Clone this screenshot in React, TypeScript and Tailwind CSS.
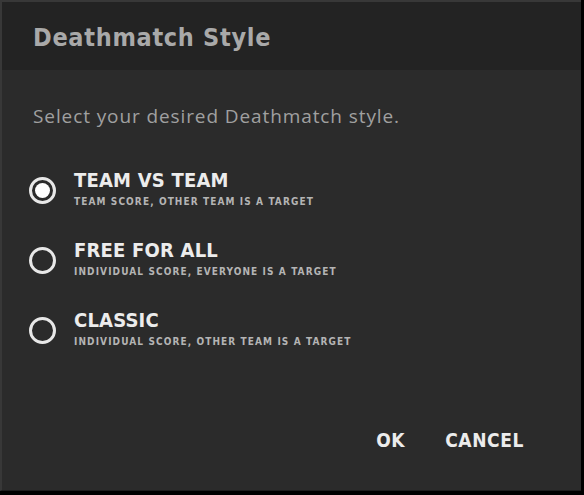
import React, { useState } from "react";

type styleOption = {
  title: string;
  description: string;
};

const Style_List: styleOption[] = [
  { title: "TEAM VS TEAM", description: "TEAM SCORE, OTHER TEAM IS A TARGET" },
  { title: "FREE FOR ALL", description: "INDIVIDUAL SCORE, EVERYONE IS A TARGET" },
  { title: "CLASSIC", description: "INDIVIDUAL SCORE, OTHER TEAM IS A TARGET" },
];

const stratum = { fontFamily: '"DejaVu Sans Condensed", "DejaVu Sans", sans-serif' };

const App: React.FC<{}> = () => {
  const [selected, setSelected] = useState(0);

  return (
    <div className="w-[584px] h-[495px] bg-black">
      <div className="w-[581px] h-[491px] flex flex-col bg-[#2b2b2b] border-t-2 border-l-2 border-[#383838] border-b border-b-[#1e1e1e]">
        <div className="h-[68px] bg-[#232323] flex items-center pl-[31px]">
          <h1
            style={stratum}
            className="text-[#a9a9a9] font-bold text-[25px] tracking-[0.7px] pt-[3px]"
          >
            Deathmatch Style
          </h1>
        </div>

        <p
          style={{ fontFamily: '"Open Sans", sans-serif' }}
          className="text-[#a0a0a0] text-[19px] tracking-[0.9px] pl-[31px] pt-[32px]"
        >
          Select your desired Deathmatch style.
        </p>

        <div className="flex flex-col pl-[27px] pt-[36px] gap-[23px]">
          {Style_List.map((option, index) => (
            <div
              key={index}
              onClick={() => setSelected(index)}
              className="flex items-center gap-[18px] cursor-pointer h-[47px]"
            >
              <div className="w-[27px] h-[27px] rounded-full border-[3px] border-[#e8e8e8] flex items-center justify-center">
                {selected === index && (
                  <div className="w-[15px] h-[15px] rounded-full bg-white" />
                )}
              </div>
              <div style={stratum} className="flex flex-col">
                <span className="text-[#ececec] font-bold text-[20px] tracking-[0.2px] leading-[24px]">
                  {option.title}
                </span>
                <span className="text-[#b4b4b4] font-bold text-[10px] tracking-[1.1px] leading-[20px]">
                  {option.description}
                </span>
              </div>
            </div>
          ))}
        </div>

        <div
          style={stratum}
          className="mt-auto mb-[36px] flex justify-end gap-[40px] pr-[57px] text-[#ececec] font-bold text-[19px] tracking-[0.6px]"
        >
          <button className="cursor-pointer">OK</button>
          <button className="cursor-pointer">CANCEL</button>
        </div>
      </div>
    </div>
  );
};

export default App;
